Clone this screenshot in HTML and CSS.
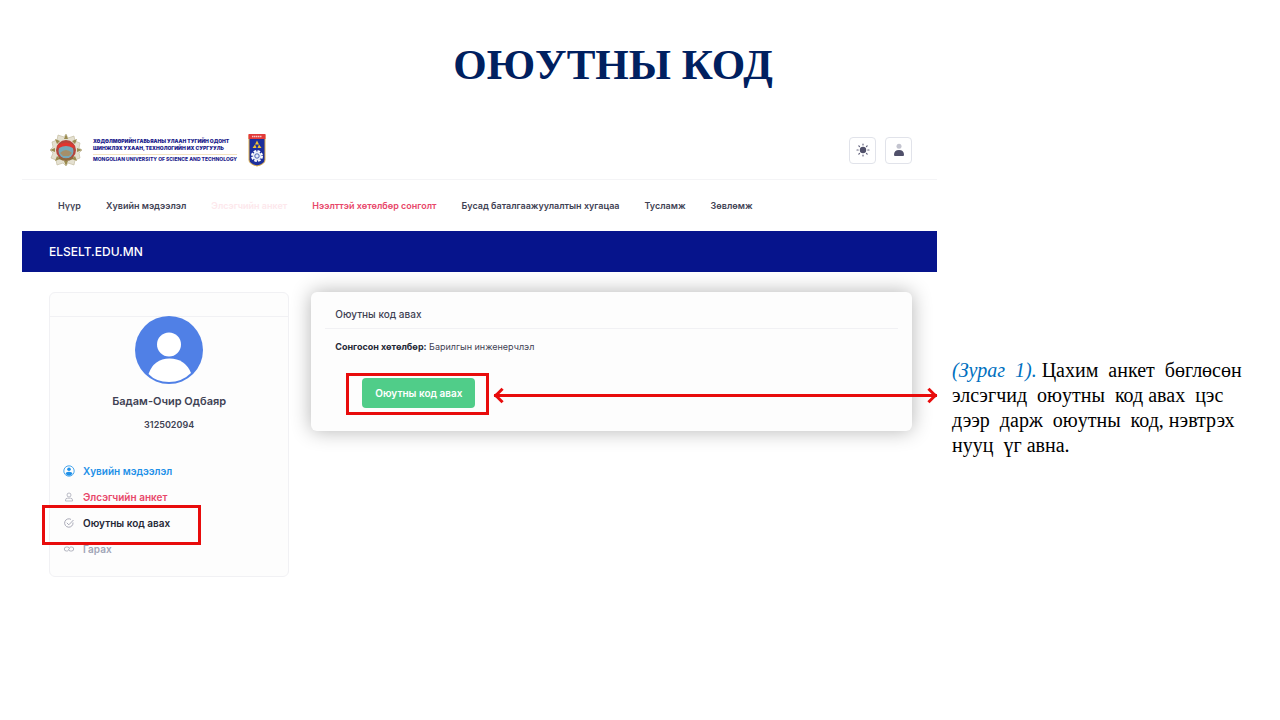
FILE: index.html
```html
<!DOCTYPE html>
<html lang="mn">
  <head>
    <meta charset="utf-8" />
    <meta name="viewport" content="width=device-width, initial-scale=1.0" />
    <title>Оюутны код</title>
    <link rel="stylesheet" href="styles.css">
  </head>
  <body>
    <h1 class="title">ОЮУТНЫ КОД</h1>

    <main class="slide">
      <div class="app">
        <header class="header">
          <a class="brand" href="#">
            <svg class="order" viewBox="0 0 32 32" aria-hidden="true">
              <path d="M16 0l2 4 6-2 1 5 5 2-1 5 3 2-3 3 1 5-5 2-1 5-6-2-2 3-3-3-6 2-1-5-5-2 2-5-3-3 3-3-1-5 5-2 1-5 6 2z" fill="#e4e0d0" stroke="#bdb597" stroke-width=".6" />
              <path d="M16 0l2 5h-4zM16 32l2-5h-4zM0 16l5-2v4zM32 16l-5-2v4zM5 5l5 2-3 3zM27 5l-5 2 3 3zM5 27l2-5 3 3zM27 27l-2-5-3 3z" fill="#9a8a4e" />
              <circle cx="16" cy="16" r="10" fill="#b5443c" />
              <circle cx="16" cy="17" r="7.500" fill="#78a9b8" />
              <path d="M7 12q9-7 18 0l-2 2q-7-4-14 0z" fill="#e0362f" />
              <path d="M10 19q6-6 12 0l-3 3h-6z" fill="#a58f6a" />
              <path d="M8 22q8 5 16 0l-1 3q-7 4-14 0z" fill="#8d6a3c" />
            </svg>
            <span class="brand-text">
              <span class="brand-mn">ХӨДӨЛМӨРИЙН ГАВЬЯАНЫ УЛААН ТУГИЙН ОДОНТ</span>
              <span class="brand-mn">ШИНЖЛЭХ УХААН, ТЕХНОЛОГИЙН ИХ СУРГУУЛЬ</span>
              <span class="brand-en">MONGOLIAN UNIVERSITY OF SCIENCE AND TECHNOLOGY</span>
            </span>
            <svg class="shield" viewBox="0 0 18 33" aria-hidden="true">
              <path d="M1 1h16v25q0 4-8 6q-8-2-8-6z" fill="#1d2f9c" stroke="#e0b04a" />
              <path d="M.5 0h17v5H.5z" fill="#e23a3a" />
              <path d="M4 2.500h10" stroke="#f6c6c6" stroke-width="1.500" stroke-dasharray="1.500 .5" />
              <path d="M9 6.500l2 4h-4zM7 10.500l1.500 3.500H4.500zM11 10.500l-1.500 3.500h4z" fill="#f2c230" />
              <circle cx="9" cy="22" r="5" fill="none" stroke="#fff" stroke-width="2" stroke-dasharray="2.600 1.320" />
              <circle cx="9" cy="22" r="4.400" fill="#e8edf8" />
              <circle cx="9" cy="22" r="2.200" fill="none" stroke="#3c57ad" stroke-width=".9" />
            </svg>
          </a>
          <div class="tools">
            <button class="tool" type="button" aria-label="Өдрийн горим">
              <svg viewBox="0 0 14 14" aria-hidden="true">
                <circle cx="7" cy="7" r="3.200" fill="#50506a" />
                <path d="M7 1v1M7 12v1M1 7h1.200M11.800 7H13M2.800 2.800l.7.7M10.500 10.500l.7.700M2.800 11.200l.7-.7M10.500 3.500l.7-.7" stroke="#66667f" stroke-width="1.200" stroke-linecap="round" />
              </svg>
            </button>
            <button class="tool" type="button" aria-label="Хэрэглэгч">
              <svg viewBox="0 0 14 14" aria-hidden="true">
                <circle cx="7" cy="3.200" r="2.500" fill="#c3c4cf" />
                <path d="M2 12q0-5 5-5t5 5q0 1-1 1H3q-1 0-1-1z" fill="#50506a" />
              </svg>
            </button>
          </div>
        </header>

        <nav class="nav">
          <a href="#">Нүүр</a>
          <a href="#">Хувийн мэдээлэл</a>
          <a class="faded" href="#">Элсэгчийн анкет</a>
          <a class="danger" href="#">Нээлттэй хөтөлбөр сонголт</a>
          <a href="#">Бусад баталгаажуулалтын хугацаа</a>
          <a href="#">Тусламж</a>
          <a href="#">Зөвлөмж</a>
        </nav>

        <div class="banner">ELSELT.EDU.MN</div>

        <div class="content">
          <aside class="profile">
            <div class="profile-top"></div>
            <svg class="avatar" viewBox="0 0 68 68" aria-hidden="true">
              <circle cx="34" cy="34" r="34" fill="#5080e6" />
              <circle cx="34" cy="28.500" r="12" fill="#fff" />
              <path d="M13.500 58Q19 42.500 34.500 42.500T56 57Q47 66 34 66T13.500 58z" fill="#fff" />
            </svg>
            <h2 class="name">Бадам-Очир Одбаяр</h2>
            <div class="code">312502094</div>
            <ul class="menu">
              <li>
                <a class="info" href="#">
                  <svg viewBox="0 0 12 12" aria-hidden="true">
                    <circle cx="6" cy="6" r="5.200" fill="none" stroke="#1e90e8" stroke-width=".8" />
                    <circle cx="6" cy="4.300" r="1.800" fill="#1e90e8" />
                    <path d="M2.500 8.500Q3 6.800 6 6.800t3.500 1.700Q8 10.800 6 10.800T2.500 8.500z" fill="#1e90e8" />
                  </svg>
                  Хувийн мэдээлэл
                </a>
              </li>
              <li>
                <a class="danger" href="#">
                  <svg viewBox="0 0 12 12" fill="none" stroke="#a9abb8" stroke-width=".8" aria-hidden="true">
                    <circle cx="6" cy="4" r="2" />
                    <path d="M2.500 10V9Q2.500 7.200 4.500 7.200h3q2 0 2 1.800v1z" />
                  </svg>
                  Элсэгчийн анкет
                </a>
              </li>
              <li class="marked">
                <a class="current" href="#">
                  <svg viewBox="0 0 12 12" fill="none" stroke="#9496a6" stroke-width=".8" aria-hidden="true">
                    <path d="M10 5.500A4.200 4.200 0 1 1 8 2.400M3.800 5.800l2 2L10.500 3" />
                  </svg>
                  Оюутны код авах
                </a>
              </li>
              <li>
                <a href="#">
                  <svg viewBox="0 0 12 12" fill="none" stroke="#a9abb8" stroke-width=".9" aria-hidden="true">
                    <path d="M5.500 7.200Q5 8 3.800 8H3.300a2 2 0 0 1 0-4H4.500a2 2 0 0 1 2 2M6.500 4.800Q7 4 8.200 4h.5a2 2 0 0 1 0 4H7.500a2 2 0 0 1-2-2" />
                  </svg>
                  Гарах
                </a>
              </li>
            </ul>
          </aside>

          <section class="card">
            <h2 class="card-title">Оюутны код авах</h2>
            <p class="program"><b>Сонгосон хөтөлбөр:</b> Барилгын инженерчлэл</p>
            <div class="action">
              <div class="frame">
                <button class="submit" type="button">Оюутны код авах</button>
              </div>
              <div class="arrow"></div>
            </div>
          </section>
        </div>
      </div>

      <p class="note">
        <em>(Зураг&nbsp; 1).</em> Цахим&nbsp; анкет&nbsp; бөглөсөн<br />
        элсэгчид&nbsp; оюутны&nbsp; код авах&nbsp; цэс<br />
        дээр&nbsp; дарж&nbsp; оюутны&nbsp; код, нэвтрэх<br />
        нууц&nbsp; үг авна.
      </p>
    </main>
  </body>
</html>
```
FILE: styles.css
```css
*,
*::before,
*::after {
  box-sizing: border-box;
}

body {
  margin: 0;
  background: #fff;
  font-family: Inter, 'Liberation Sans', sans-serif;
  color: #3f4254;
}

h1,
h2,
p,
ul {
  margin: 0;
  padding: 0;
}

a {
  color: inherit;
  text-decoration: none;
}

button {
  font-family: inherit;
  cursor: pointer;
}

.title {
  padding: 40px 54px 31px 0;
  font-family: 'Liberation Serif', serif;
  font-size: 43px;
  line-height: 50px;
  text-align: center;
  color: #002060;
}

.slide {
  display: grid;
  grid-template-columns: 2.79fr 1fr;
  gap: 15px;
  padding-left: 22px;
}

.header {
  display: flex;
  justify-content: space-between;
  align-items: center;
  height: 59px;
  padding: 0 25px 0 28px;
  border-bottom: 1px solid #f4f4f6;
}

.brand {
  display: flex;
  align-items: center;
}

.order {
  width: 32px;
  height: 32px;
}

.brand-text {
  display: flex;
  flex-direction: column;
  width: 144px;
  margin: 0 11px;
  font-size: 5px;
  line-height: 7px;
  white-space: nowrap;
  color: #1c1c8c;
}

.brand-mn {
  font-weight: 900;
}

.brand-en {
  margin-top: 2px;
  padding-top: 1px;
  border-top: 1px solid #f3e3c0;
  font-weight: 800;
}

.shield {
  width: 18px;
  height: 33px;
}

.tools {
  display: flex;
  gap: 9px;
}

.tool {
  display: flex;
  align-items: center;
  justify-content: center;
  width: 27px;
  height: 27px;
  padding: 0;
  border: 1px solid #e1e3ea;
  border-radius: 4px;
  background: #fff;
}

.tool svg {
  width: 14px;
  height: 14px;
}

.nav {
  display: flex;
  align-items: center;
  gap: 25px;
  height: 51px;
  padding-left: 36px;
  font-size: 9px;
  font-weight: 600;
  white-space: nowrap;
}

.faded {
  color: #fde8ec;
}

.danger {
  color: #e8476a;
}

.banner {
  padding: 0 27px;
  background: #06148c;
  font-size: 12px;
  font-weight: 500;
  line-height: 41px;
  color: #fff;
}

.content {
  display: grid;
  grid-template-columns: 2fr 5fr;
  align-items: start;
  gap: 22px;
  padding: 20px 25px 0 27px;
}

.profile {
  padding-bottom: 14px;
  border: 1px solid #f1f1f4;
  border-radius: 6px;
  background: #fdfdfd;
  text-align: center;
}

.profile-top {
  height: 24px;
  border-bottom: 1px solid #f1f1f4;
}

.avatar {
  display: block;
  width: 68px;
  height: 68px;
  margin: -1px auto 0;
}

.name {
  margin-top: 8px;
  font-size: 11px;
  font-weight: 600;
  line-height: 18px;
}

.code {
  margin-top: 8px;
  font-size: 9px;
  font-weight: 600;
  line-height: 14px;
}

.menu {
  margin-top: 26px;
  list-style: none;
}

.menu li {
  position: relative;
}

.menu a {
  display: flex;
  align-items: center;
  gap: 8px;
  padding-left: 13px;
  font-size: 10px;
  font-weight: 600;
  line-height: 26px;
  color: #a1a5b7;
}

.menu svg {
  width: 12px;
  height: 12px;
}

.menu .info {
  color: #1e90e8;
}

.menu .danger {
  color: #e8476a;
}

.menu .current {
  color: #252836;
}

/* red frame around the menu item the note is about */
.marked::after {
  content: '';
  position: absolute;
  top: -5px;
  left: -8px;
  width: 159px;
  height: 40px;
  border: 3px solid #e80c0c;
}

.card {
  padding: 8px 14px 16px;
  border-radius: 6px;
  background: #fdfdfd;
  box-shadow: 0 0 20px rgba(0, 0, 0, 0.3);
}

.card-title {
  padding: 0 10px;
  border-bottom: 1px solid #f1f1f4;
  font-size: 10px;
  font-weight: 500;
  line-height: 28px;
}

.program {
  padding: 10px 10px 0;
  font-size: 9px;
  line-height: 16px;
}

.program b {
  font-weight: 700;
  color: #252836;
}

.action {
  position: relative;
  display: flex;
  margin: 18px 0 0 21px;
}

.frame {
  padding: 2px 11px 4px 13px;
  border: 3px solid #e80c0c;
}

.submit {
  display: block;
  padding: 0 13px;
  border: 0;
  border-radius: 4px;
  background: #50cd89;
  font-size: 10px;
  font-weight: 600;
  line-height: 30px;
  color: #fff;
}

/* runs out of the card up to the note */
.arrow {
  position: absolute;
  top: 21px;
  left: 148px;
  right: -39px;
  height: 3px;
  background: #e80c0c;
}

.arrow::before,
.arrow::after {
  content: '';
  position: absolute;
  top: -4px;
  width: 11px;
  height: 11px;
  border: solid #e80c0c;
  transform: rotate(45deg);
}

.arrow::before {
  left: 2px;
  border-width: 0 0 3px 3px;
}

.arrow::after {
  right: 2px;
  border-width: 3px 3px 0 0;
}

.note {
  padding-top: 237px;
  font-family: 'Liberation Serif', serif;
  font-size: 20px;
  line-height: 25px;
  white-space: nowrap;
  color: #000;
}

.note em {
  color: #0070c0;
}
```
